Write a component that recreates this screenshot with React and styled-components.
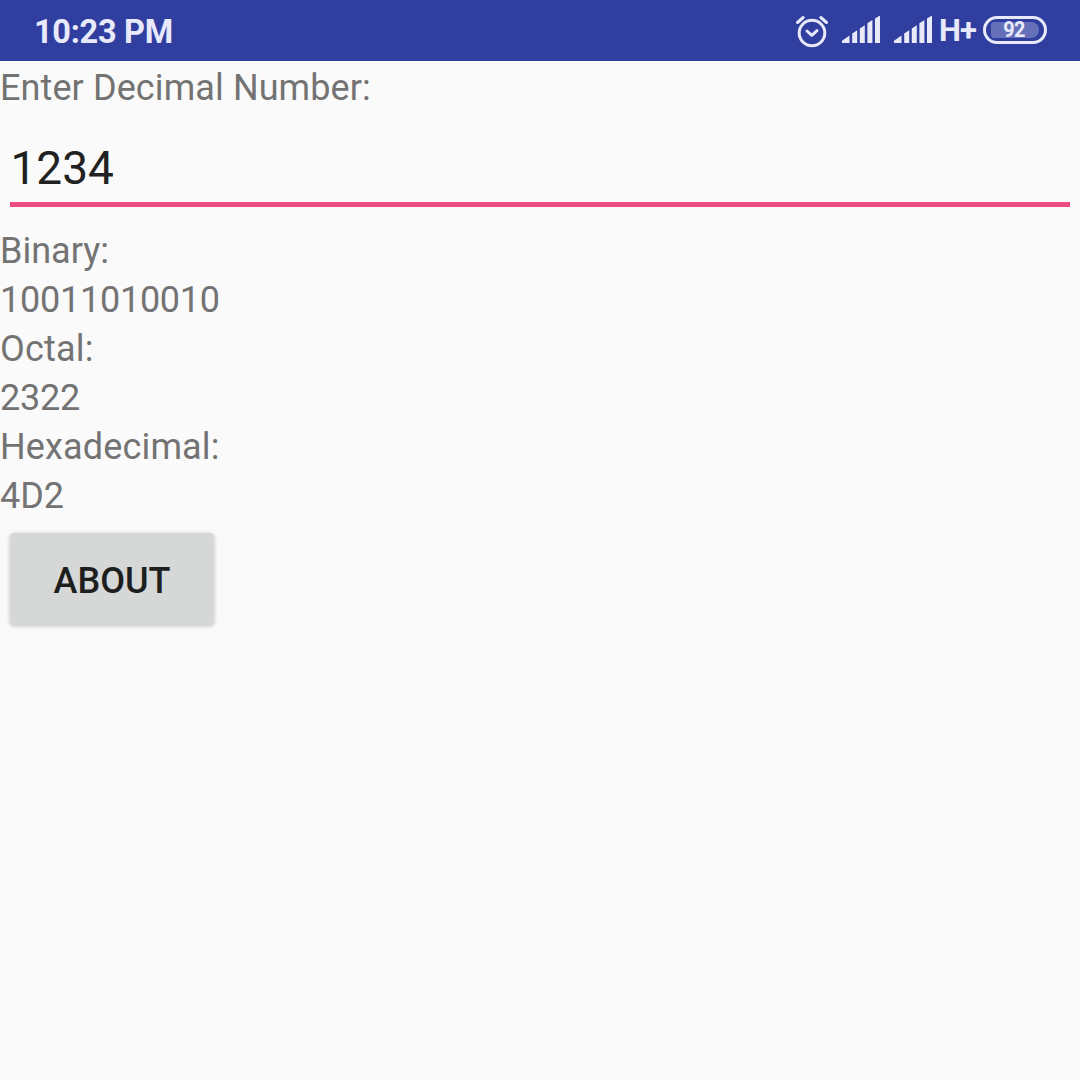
import React, { useState } from "react";
import styled, { createGlobalStyle } from "styled-components";

const ink = "#e8eafb";

const GlobalStyle = createGlobalStyle`
  *, *::before, *::after { box-sizing: border-box; }
  body { margin: 0; background: #fafafa; font-family: Roboto, "Noto Sans", sans-serif; }
`;

const Screen = styled.div`
  display: flex;
  flex-direction: column;
  width: 100%;
  height: 100vh;
  overflow: hidden;
  background: #fafafa;
`;

const StatusBar = styled.header`
  display: flex;
  align-items: center;
  justify-content: space-between;
  flex: none;
  height: 61px;
  padding: 0 33px 0 34px;
  background: #303f9f;
  color: ${ink};
`;

const Clock = styled.span`
  font-size: 32.5px;
  line-height: 38px;
  font-weight: 700;
  letter-spacing: -0.3px;
  padding-top: 2px;
`;

const StatusIcons = styled.div`
  display: flex;
  align-items: center;
  height: 61px;
`;

const StatusSvg = styled.svg`
  display: block;
  flex: none;
  margin-right: ${(p) => p.$after}px;
`;

const NetworkType = styled.span`
  width: 37px;
  margin-right: 7px;
  font-size: 31px;
  line-height: 36px;
  font-weight: 700;
  letter-spacing: -1px;
  white-space: nowrap;
`;

const Battery = styled.div`
  width: 64px;
  height: 28px;
  margin-bottom: 1px;
  padding: 3px 5px;
  border: 3px solid ${ink};
  border-radius: 14px;
`;

const BatteryLevel = styled.div`
  display: flex;
  align-items: center;
  justify-content: center;
  height: 16px;
  padding-right: 2px;
  border-radius: 3px 8px 8px 3px;
  background: #6570b8;
`;

const BatteryText = styled.span`
  font-size: 22px;
  line-height: 16px;
  font-weight: 700;
  letter-spacing: -0.6px;
  transform: scaleX(0.9);
`;

const Converter = styled.main`
  display: flex;
  flex-direction: column;
  align-items: flex-start;
  padding-top: 3px;
`;

const Line = styled.div`
  height: 49px;
  font-size: 36px;
  line-height: 49px;
  letter-spacing: ${(p) => p.$tracking || 0}px;
  color: #737373;
  white-space: nowrap;
`;

const NumberInput = styled.input`
  display: block;
  width: calc(100% - 20px);
  height: 75px;
  margin: 19px 10px 20px;
  padding: 1px 0 0 0.5px;
  border: 0;
  border-bottom: 5px solid #ec4b84;
  border-radius: 0;
  outline: none;
  background: transparent;
  color: #212121;
  font: 400 46px/65px Roboto, "Noto Sans", sans-serif;
`;

const AboutButton = styled.button`
  width: 204px;
  height: 92px;
  margin: 12px 0 0 10px;
  padding: 3px 0 0;
  border: 0;
  border-radius: 4px;
  background: #d6d8d7;
  box-shadow: 0 1px 4px rgba(0, 0, 0, 0.24);
  color: #1d1f1e;
  font: 500 36px/42px Roboto, "Noto Sans", sans-serif;
`;

function AlarmIcon() {
  return (
    <StatusSvg $after={13} width="34" height="34" viewBox="0 0 34 34" fill="none" stroke={ink} strokeWidth="3" strokeLinecap="round" strokeLinejoin="round">
      <circle cx="17" cy="19" r="12.8" />
      <path d="M2.5 8.5 8.2 3.5M25.8 3.5l5.7 5M12 17l4.8 4.3 5.2-4.6" />
    </StatusSvg>
  );
}

function SignalIcon({ after }) {
  return (
    <StatusSvg $after={after} width="38" height="29" viewBox="0 0 38 29" fill={ink}>
      <path d="M0 24.8L7.5 19.5V27H0zM10.2 17.5l5-3.2V27h-5zM17.8 12.5l5-3.2V27h-5zM25.4 7.3l5-3.2V27h-5zM33 2.5L37.2 0H38v27h-5z" />
    </StatusSvg>
  );
}

export default function App() {
  const [value, setValue] = useState("1234");
  const number = parseInt(value, 10) || 0;
  return (
    <Screen>
      <GlobalStyle />
      <StatusBar>
        <Clock>10:23 PM</Clock>
        <StatusIcons>
          <AlarmIcon />
          <SignalIcon after={14} />
          <SignalIcon after={7} />
          <NetworkType>H+</NetworkType>
          <Battery>
            <BatteryLevel>
              <BatteryText>92</BatteryText>
            </BatteryLevel>
          </Battery>
        </StatusIcons>
      </StatusBar>
      <Converter>
        <Line $tracking={0.1}>Enter Decimal Number:</Line>
        <NumberInput value={value} onChange={(e) => setValue(e.target.value)} />
        <Line>Binary:</Line>
        <Line $tracking={-0.25}>{number.toString(2)}</Line>
        <Line $tracking={0.2}>Octal:</Line>
        <Line $tracking={-0.2}>{number.toString(8)}</Line>
        <Line $tracking={0.15}>Hexadecimal:</Line>
        <Line>{number.toString(16).toUpperCase()}</Line>
        <AboutButton>ABOUT</AboutButton>
      </Converter>
    </Screen>
  );
}
